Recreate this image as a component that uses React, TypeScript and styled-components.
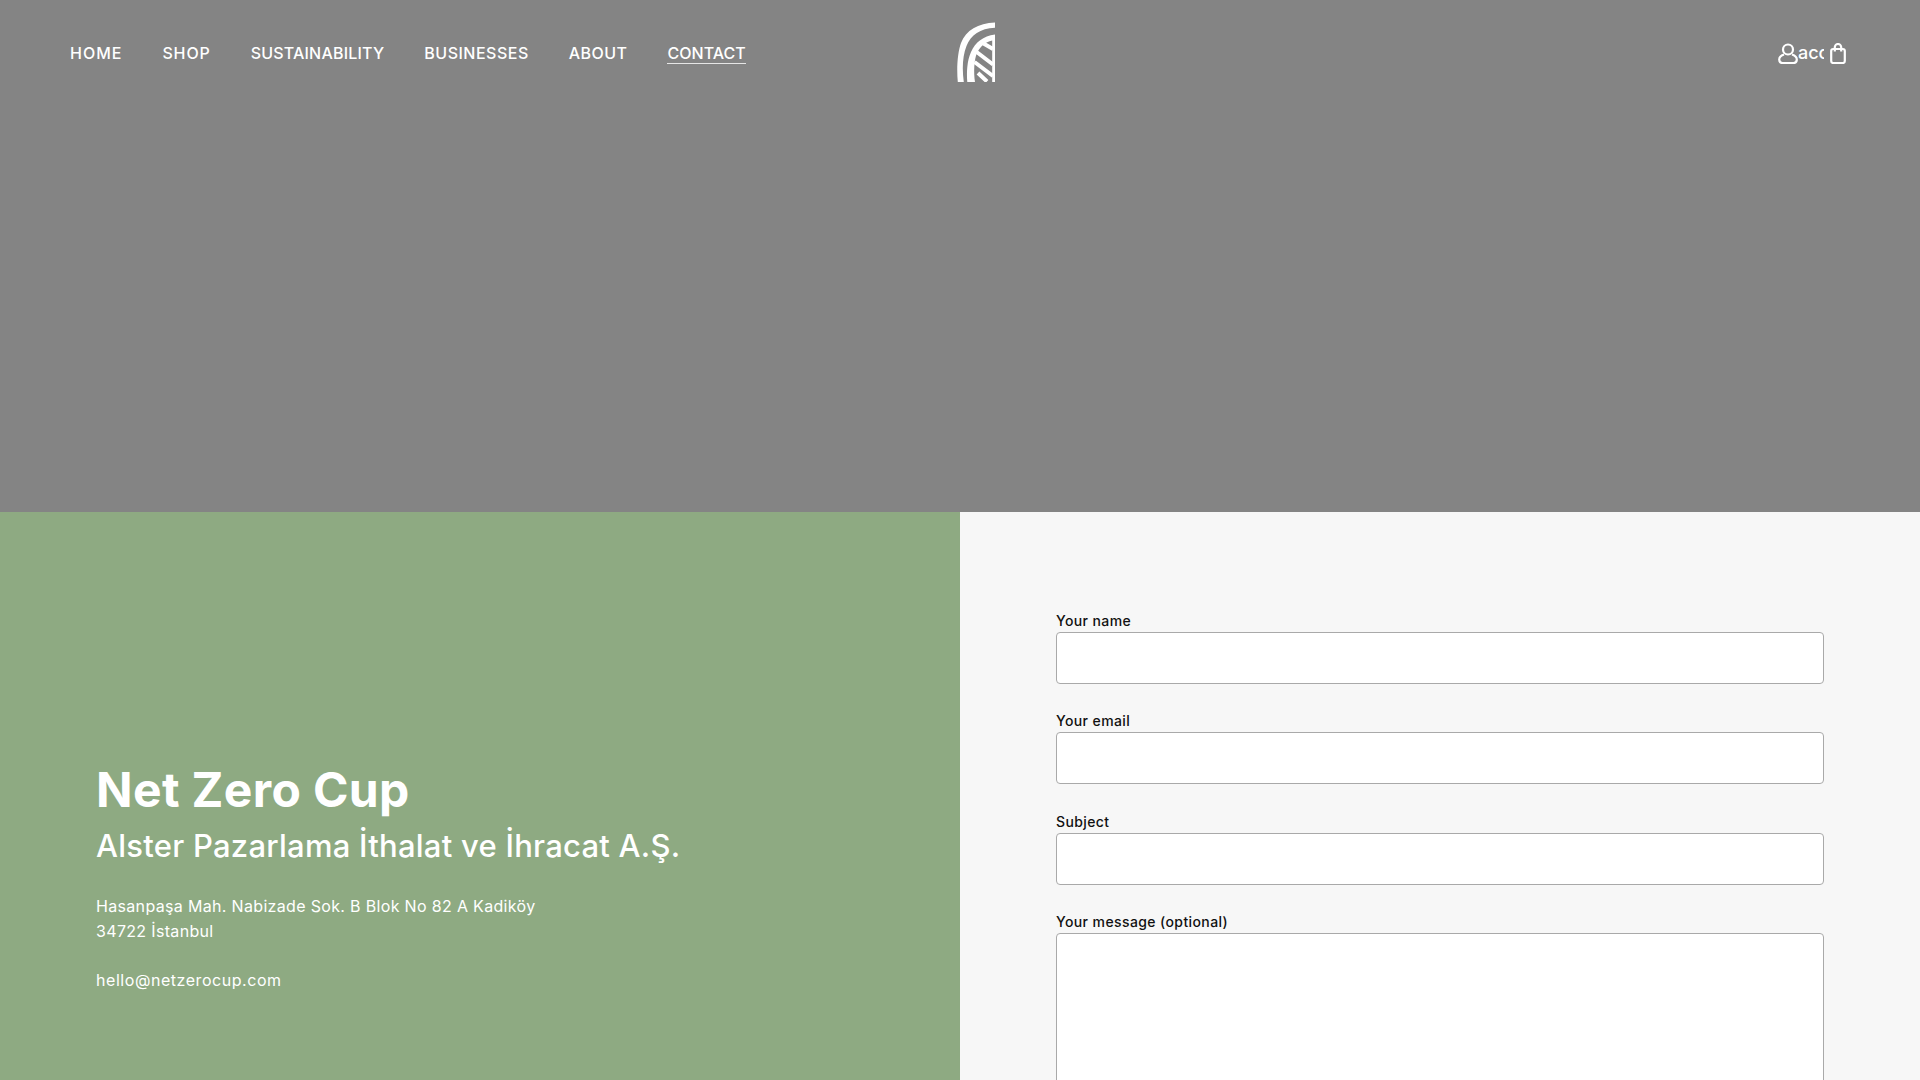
import React from "react";
import styled, { createGlobalStyle } from "styled-components";

const Global = createGlobalStyle`
  html, body { margin: 0; padding: 0; height: 100%; overflow: hidden; }
  * { box-sizing: border-box; }
  body { font-family: Inter, "Noto Sans", "Liberation Sans", sans-serif; }
`;
const Page = styled.div`
  width: 1920px;
  height: 1080px;
  overflow: hidden;
  display: flex;
  flex-direction: column;
`;
const Hero = styled.section`
  height: 511.5px;
  flex: none;
  background: #848484;
`;
const Header = styled.header`
  display: grid;
  grid-template-columns: 887px 40px 1fr;
  align-items: start;
  padding: 22px 74px 0 70px;
  color: #fff;
`;
const Nav = styled.nav`
  display: flex;
  gap: 40px;
  padding-top: 22px;
`;
const NavLink = styled.a<{ $active?: boolean; $track: number }>`
  font-size: 16px;
  line-height: 19px;
  font-weight: 500;
  letter-spacing: ${(p) => p.$track}px;
  white-space: nowrap;
  color: #fff;
  border-bottom: 1px solid ${(p) => (p.$active ? "rgba(255,255,255,.8)" : "transparent")};
`;
const Logo = styled.svg`
  display: block;
  width: 40px;
  height: 60px;
`;
const Actions = styled.div`
  display: flex;
  justify-content: flex-end;
  align-items: center;
  padding-top: 20px;
  height: 42px;
`;
const Account = styled.a`
  display: flex;
  align-items: center;
  width: 46px;
  overflow: hidden;
  margin-right: 6px;
`;
const AccountText = styled.span`
  font-size: 18px;
  font-weight: 500;
  line-height: 22px;
  color: #fff;
`;
const Icon = styled.svg`
  display: block;
  flex: none;
`;
const Split = styled.main`
  flex: 1;
  display: grid;
  grid-template-columns: 960px 960px;
  min-height: 0;
`;
const Info = styled.section`
  background: #8eaa82;
  color: #fff;
  padding: 250.5px 96px 0;
`;
const Title = styled.h1`
  margin: 0;
  font-size: 48px;
  line-height: 56px;
  letter-spacing: 0.35px;
  font-weight: 700;
`;
const Subtitle = styled.h2`
  margin: 9px 0 29px;
  font-size: 31px;
  line-height: 38px;
  letter-spacing: 0.25px;
  font-weight: 500;
`;
const Address = styled.p`
  margin: 0;
  font-size: 16px;
  line-height: 25px;
  letter-spacing: 0.33px;
`;
const Email = styled.p`
  margin: 24px 0 0;
  font-size: 16px;
  line-height: 25px;
  letter-spacing: 0.55px;
`;
const FormPanel = styled.section`
  background: #f7f7f7;
  padding: 100.5px 96px 0;
  overflow: hidden;
`;
const Field = styled.div`
  display: flex;
  flex-direction: column;
  margin-bottom: 28.4px;
`;
const Label = styled.label`
  font-size: 14px;
  line-height: 18px;
  margin-bottom: 2px;
  letter-spacing: 0.4px;
  font-weight: 500;
  color: #111;
`;
const Input = styled.input`
  display: block;
  width: 768px;
  height: 52px;
  background: #fff;
  border: 1px solid #a9a9a9;
  border-radius: 4px;
`;
const Textarea = styled.textarea`
  display: block;
  width: 768px;
  height: 220px;
  background: #fff;
  border: 1px solid #a9a9a9;
  border-radius: 4px;
  resize: none;
`;

const links: [string, number][] = [
  ["HOME", 1],
  ["SHOP", 0.85],
  ["SUSTAINABILITY", 0.2],
  ["BUSINESSES", 0.5],
  ["ABOUT", 0.45],
  ["CONTACT", 0.05],
];

export default function App() {
  return (
    <Page>
      <Global />
      <Hero>
        <Header>
          <Nav>
            {links.map(([label, track]) => (
              <NavLink key={label} $track={track} $active={label === "CONTACT"}>
                {label}
              </NavLink>
            ))}
          </Nav>
          <Logo viewBox="0 0 40 60" aria-label="logo">
            <g fill="#fff">
              <path d="M0.8 60C-0.5 46 0.5 31 4 21C9 8 21 1.2 38 0.4V5.8C23 6.5 14 13 9.5 24C5.5 34 5 47 6.8 60Z" />
              <path d="M10.3 60C9.5 50 10 39 14 30C18.5 20 26 14 38 12.4V60H35.2V18.5C28 20 23 25 20 31C17 38 16.5 50 18 60Z" />
            </g>
            <g stroke="#fff" strokeWidth="4" fill="none">
              <path d="M26.5 21.5L36 27M19 29.5L36 42.5M17.5 40L36 54M21 51L30 59.5" />
            </g>
          </Logo>
          <Actions>
            <Account>
              <Icon width="20" height="21" viewBox="0 0 20 21" fill="none" stroke="#fff" strokeWidth="2.2">
                <circle cx="10" cy="6.5" r="5" />
                <path d="M6 11.5C3 12.5 1.2 14 1.2 16.5C1.2 18.5 2.5 20 4.5 20H15.5C17.5 20 18.8 18.5 18.8 16.5C18.8 14 17 12.5 14 11.5" />
              </Icon>
              <AccountText>account</AccountText>
            </Account>
            <Icon width="16" height="21" viewBox="0 0 16 21" fill="none" stroke="#fff" strokeWidth="2.2">
              <rect x="1.2" y="6" width="13.6" height="14" rx="2" />
              <path d="M4.8 8.5V4.2a3.2 3.2 0 0 1 6.4 0v4.3" />
            </Icon>
          </Actions>
        </Header>
      </Hero>
      <Split>
        <Info>
          <Title>Net Zero Cup</Title>
          <Subtitle>Alster Pazarlama İthalat ve İhracat A.Ş.</Subtitle>
          <Address>
            Hasanpaşa Mah. Nabizade Sok. B Blok No 82 A Kadiköy
            <br />
            34722 İstanbul
          </Address>
          <Email>hello@netzerocup.com</Email>
        </Info>
        <FormPanel>
          <Field>
            <Label>Your name</Label>
            <Input />
          </Field>
          <Field>
            <Label>Your email</Label>
            <Input />
          </Field>
          <Field>
            <Label>Subject</Label>
            <Input />
          </Field>
          <Field>
            <Label>Your message (optional)</Label>
            <Textarea />
          </Field>
        </FormPanel>
      </Split>
    </Page>
  );
}
